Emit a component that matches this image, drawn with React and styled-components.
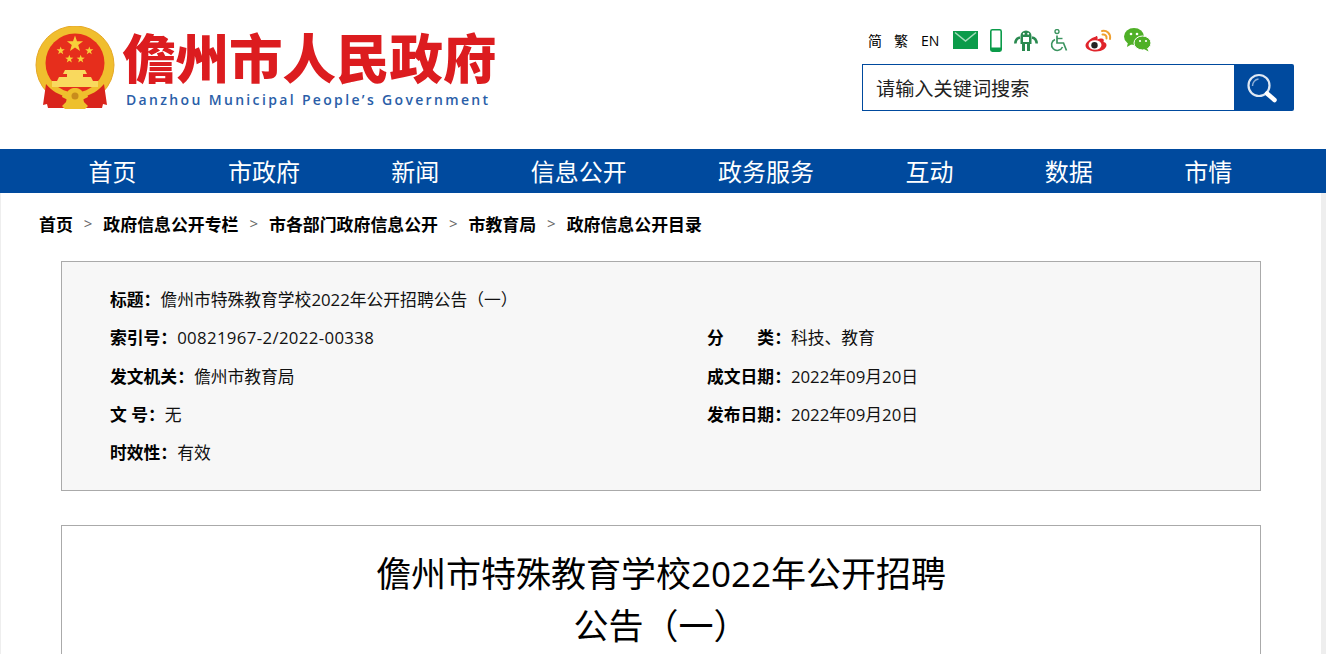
import React from 'react';
import styled, { createGlobalStyle } from 'styled-components';

const FONT = '"Open Sans", "Noto Sans CJK SC", sans-serif';
const BLUE = '#004a9e';

const GlobalStyle = createGlobalStyle`
  html, body {
    margin: 0;
    padding: 0;
    height: 654px;
    overflow: hidden;
    background: #fff;
    font-family: ${FONT};
    color: #000;
  }
`;

const Header = styled.header`
  display: flex;
  justify-content: space-between;
  height: 149px;
  box-sizing: border-box;
  padding: 26px 32px 0 35px;
`;

const Logo = styled.div`
  display: flex;
  align-items: flex-start;
  gap: 7px;
`;

const LogoText = styled.div`
  display: flex;
  flex-direction: column;
  margin-top: -2px;
`;

const LogoTitle = styled.div`
  font: 900 53.5px/64px "Noto Sans CJK SC", sans-serif;
  color: #dc1c1f;
  white-space: nowrap;
`;

const LogoSub = styled.div`
  font: 600 14px/16px "Open Sans", sans-serif;
  letter-spacing: 2.34px;
  color: #2a5ea8;
  margin: 4px 0 0 4px;
  white-space: nowrap;
`;

const Tools = styled.div`
  display: flex;
  flex-direction: column;
  width: 432px;
`;

const ToolRow = styled.div`
  display: flex;
  align-items: center;
  height: 28px;
  margin-bottom: 10px;
  padding-left: 6px;
`;

const Lang = styled.a`
  font-size: 14px;
  width: ${(p) => p.$w}px;
  white-space: nowrap;
`;

const ToolIcon = styled.svg`
  display: block;
  flex: none;
  margin-right: ${(p) => p.$gap}px;
`;

const Search = styled.div`
  display: flex;
  height: 47px;
`;

const SearchInput = styled.div`
  flex: 1;
  box-sizing: border-box;
  border: 1px solid ${BLUE};
  border-right: 0;
  padding-left: 13px;
  font-size: 19.2px;
  line-height: 47px;
  color: #222;
`;

const SearchButton = styled.div`
  display: flex;
  align-items: center;
  justify-content: center;
  width: 60px;
  padding-right: 4px;
  box-sizing: border-box;
  background: ${BLUE};
  border-radius: 0 2px 2px 0;
`;

const Nav = styled.nav`
  display: flex;
  gap: 91.4px;
  height: 44px;
  padding-left: 88.500px;
  background: ${BLUE};
`;

const NavItem = styled.a`
  font-size: 24px;
  line-height: 45px;
  color: #fff;
  white-space: nowrap;
`;

const Main = styled.main`
  border-left: 1px solid #eee;
  border-right: 5px solid #eee;
  height: 461px;
`;

const Crumbs = styled.div`
  display: flex;
  align-items: center;
  gap: 10px;
  height: 68px;
  box-sizing: border-box;
  padding: 0 0 8px 38px;
  font-size: 16.9px;
  font-weight: 700;
`;

const Sep = styled.span`
  font-weight: 400;
  font-size: 15px;
  color: #666;
  margin: 0 1px;
`;

const Panel = styled.section`
  box-sizing: border-box;
  width: 1200px;
  margin-left: 60px;
  border: 1px solid #aaa;
`;

const Info = styled(Panel)`
  display: grid;
  grid-template-columns: 597px 1fr;
  grid-auto-rows: 38.25px;
  align-items: center;
  height: 230px;
  padding: 18px 48px 0;
  background: #f7f7f7;
  font-size: 16.8px;
`;

const Field = styled.div`
  grid-column: ${(p) => (p.$wide ? '1 / -1' : 'auto')};
  white-space: nowrap;
  color: #111;
`;

const Label = styled.b`
  color: #000;
  white-space: pre;
`;

const Code = styled.span`
  letter-spacing: 0.35px;
`;

const Article = styled(Panel)`
  margin-top: 34px;
  height: 200px;
  padding-top: 22px;
`;

const Title = styled.h1`
  width: 600px;
  margin: 0 auto;
  font-size: 35px;
  font-weight: 400;
  line-height: 52px;
  text-align: center;
`;

const EmblemIcon = styled.svg`
  display: block;
  flex: none;
`;

const smallStar = (cx, cy, r = 5) => {
  const pts = [];
  for (let i = 0; i < 10; i += 1) {
    const a = (Math.PI / 5) * i - Math.PI / 2;
    const d = i % 2 ? r * 0.4 : r;
    pts.push(`${(cx + d * Math.cos(a)).toFixed(2)},${(cy + d * Math.sin(a)).toFixed(2)}`);
  }
  return pts.join(' ');
};

const Emblem = () => (
  <EmblemIcon width="80" height="84" viewBox="0 0 80 84">
    <circle cx="40" cy="39" r="39" fill="#f0be2e" stroke="#e6a826" strokeWidth="1" />
    <circle cx="40" cy="37" r="29.500" fill="#e62e1c" />
    <polygon points={smallStar(40, 18, 8.500)} fill="#f7cf3a" />
    <polygon points={smallStar(25.700, 24.700, 4.300)} fill="#f7cf3a" />
    <polygon points={smallStar(54.300, 24.700, 4.300)} fill="#f7cf3a" />
    <polygon points={smallStar(34.300, 33, 4.300)} fill="#f7cf3a" />
    <polygon points={smallStar(45.700, 33, 4.300)} fill="#f7cf3a" />
    <path d="M30 44h20l2 4H28zM32 48h16v3H32zM24 51h32l2 4H22zM17 55h46v6H17z" fill="#f9d95e" />
    <path d="M11 58c6 7 13 11 21 13l-2 11H13l-1-4-4 1z" fill="#d9241c" />
    <path d="M69 58c-6 7-13 11-21 13l2 11h17l1-4 4 1z" fill="#d9241c" />
    <path d="M40 62c4 0 7 2 8 5 3 0 5 2 5 4l-6 3 6 6-3 3H30l-3-3 6-6-6-3c0-2 2-4 5-4 1-3 4-5 8-5z" fill="#eec02c" />
    <ellipse cx="40" cy="70" rx="3.500" ry="3.500" fill="#c98c1c" />
  </EmblemIcon>
);

const MailIcon = () => (
  <ToolIcon $gap={12} width="25" height="18" viewBox="0 0 25 18">
    <rect width="25" height="18" fill="#0b9b4a" />
    <path d="M2 1.500l10.500 8.500L23 1.500" fill="none" stroke="#a6dcbb" strokeWidth="1.500" />
  </ToolIcon>
);

const PhoneIcon = () => (
  <ToolIcon $gap={12} width="12" height="23" viewBox="0 0 12 23">
    <rect x="0.800" y="0.800" width="10.400" height="21.400" rx="1.600" fill="#fff" stroke="#0b9b4a" strokeWidth="1.600" />
    <rect x="1" y="18.500" width="10" height="3.500" fill="#0b9b4a" />
  </ToolIcon>
);

const RobotIcon = () => (
  <ToolIcon $gap={12} width="24" height="22" viewBox="0 0 24 22">
    <path d="M6.500 7a5.500 5.500 0 0 1 11 0v8h-1.500v7h-3v-7h-2v7H8v-7H6.500z" fill="#2a8a50" />
    <rect x="9" y="8" width="6" height="5" fill="#fff" />
    <path d="M6 8.500C3.500 9 1.500 11 1.300 14.500M18 8.500c2.500.5 4.500 2.500 4.700 6" fill="none" stroke="#2a8a50" strokeWidth="2.600" />
    <circle cx="9.800" cy="4.800" r="1" fill="#fff" />
    <circle cx="14.200" cy="4.800" r="1" fill="#fff" />
  </ToolIcon>
);

const AccessIcon = () => (
  <ToolIcon $gap={16} width="19" height="23" viewBox="0 0 19 23">
    <circle cx="7" cy="2.500" r="2" fill="none" stroke="#3c9460" strokeWidth="1.400" />
    <path d="M7 6.500v7.500h6.500l3 7.500" fill="none" stroke="#3c9460" strokeWidth="1.700" />
    <path d="M7 9.500h5.500" fill="none" stroke="#3c9460" strokeWidth="1.400" />
    <path d="M5 10.500a5.700 5.700 0 1 0 7.500 7.500" fill="none" stroke="#3c9460" strokeWidth="1.600" />
  </ToolIcon>
);

const WeiboIcon = () => (
  <ToolIcon $gap={11} width="28" height="23" viewBox="0 0 28 23">
    <path d="M11 7.500C5.500 9 .5 13.500 .5 16.500c0 3.500 5 6 10.500 6 6.500 0 10.500-3.500 10.500-6.500 0-2-2-2.800-3-3 .8-2 .3-4-3-3.500-1.500.3-3 1-3 1 .4-2.600-.2-4-1.500-3.500z" fill="#e0242b" />
    <ellipse cx="10" cy="16" rx="6.500" ry="4.800" fill="#fff" />
    <circle cx="9.500" cy="16.200" r="3.200" fill="#222" />
    <path d="M17 2c4.500-1 9 2.500 8 8M17.500 5.500c2.300-.5 4.500 1.200 4 4" fill="none" stroke="#f0a030" strokeWidth="2" strokeLinecap="round" />
  </ToolIcon>
);

const WechatIcon = () => (
  <ToolIcon $gap={0} width="27" height="24" viewBox="0 0 27 24">
    <ellipse cx="10" cy="8.500" rx="10" ry="8.500" fill="#4fb027" />
    <path d="M4 14l-1 5 5-3z" fill="#4fb027" />
    <ellipse cx="18.500" cy="15" rx="8.500" ry="7" fill="#4fb027" stroke="#fff" strokeWidth="1" />
    <path d="M23 20l1.500 3.500-4.500-2.500z" fill="#4fb027" />
    <circle cx="7" cy="6" r="1.300" fill="#fff" />
    <circle cx="13" cy="6" r="1.300" fill="#fff" />
    <circle cx="16" cy="13" r="1.100" fill="#fff" />
    <circle cx="22" cy="13" r="1.100" fill="#fff" />
  </ToolIcon>
);

const SearchIcon = () => (
  <svg width="32" height="30" viewBox="0 0 32 30">
    <circle cx="13" cy="12.500" r="10.500" fill="none" stroke="#dfe8f3" strokeWidth="2.200" />
    <path d="M6.500 13a7 7 0 0 1 6-7" fill="none" stroke="#8fb0d6" strokeWidth="1.500" />
    <path d="M21 20.500l7.500 6.500" stroke="#fff" strokeWidth="4.500" strokeLinecap="round" />
  </svg>
);

const navItems = ['首页', '市政府', '新闻', '信息公开', '政务服务', '互动', '数据', '市情'];
const crumbs = ['首页', '政府信息公开专栏', '市各部门政府信息公开', '市教育局', '政府信息公开目录'];

export default function App() {
  return (
    <>
      <GlobalStyle />
      <Header>
        <Logo>
          <Emblem />
          <LogoText>
            <LogoTitle>儋州市人民政府</LogoTitle>
            <LogoSub>Danzhou Municipal People’s Government</LogoSub>
          </LogoText>
        </Logo>
        <Tools>
          <ToolRow>
            <Lang $w={26}>简</Lang>
            <Lang $w={27}>繁</Lang>
            <Lang $w={32}>EN</Lang>
            <MailIcon />
            <PhoneIcon />
            <RobotIcon />
            <AccessIcon />
            <WeiboIcon />
            <WechatIcon />
          </ToolRow>
          <Search>
            <SearchInput>请输入关键词搜索</SearchInput>
            <SearchButton><SearchIcon /></SearchButton>
          </Search>
        </Tools>
      </Header>
      <Nav>
        {navItems.map((item) => <NavItem key={item}>{item}</NavItem>)}
      </Nav>
      <Main>
        <Crumbs>
          {crumbs.map((item, i) => (
            <React.Fragment key={item}>
              {i > 0 && <Sep>&gt;</Sep>}
              <span>{item}</span>
            </React.Fragment>
          ))}
        </Crumbs>
        <Info>
          <Field $wide><Label>标题：</Label>儋州市特殊教育学校2022年公开招聘公告（一）</Field>
          <Field><Label>索引号：</Label><Code>00821967-2/2022-00338</Code></Field>
          <Field><Label>分　　类：</Label>科技、教育</Field>
          <Field><Label>发文机关：</Label>儋州市教育局</Field>
          <Field><Label>成文日期：</Label>2022年09月20日</Field>
          <Field><Label>文 号：</Label>无</Field>
          <Field><Label>发布日期：</Label>2022年09月20日</Field>
          <Field $wide><Label>时效性：</Label>有效</Field>
        </Info>
        <Article>
          <Title>儋州市特殊教育学校2022年公开招聘<br />公告（一）</Title>
        </Article>
      </Main>
    </>
  );
}
